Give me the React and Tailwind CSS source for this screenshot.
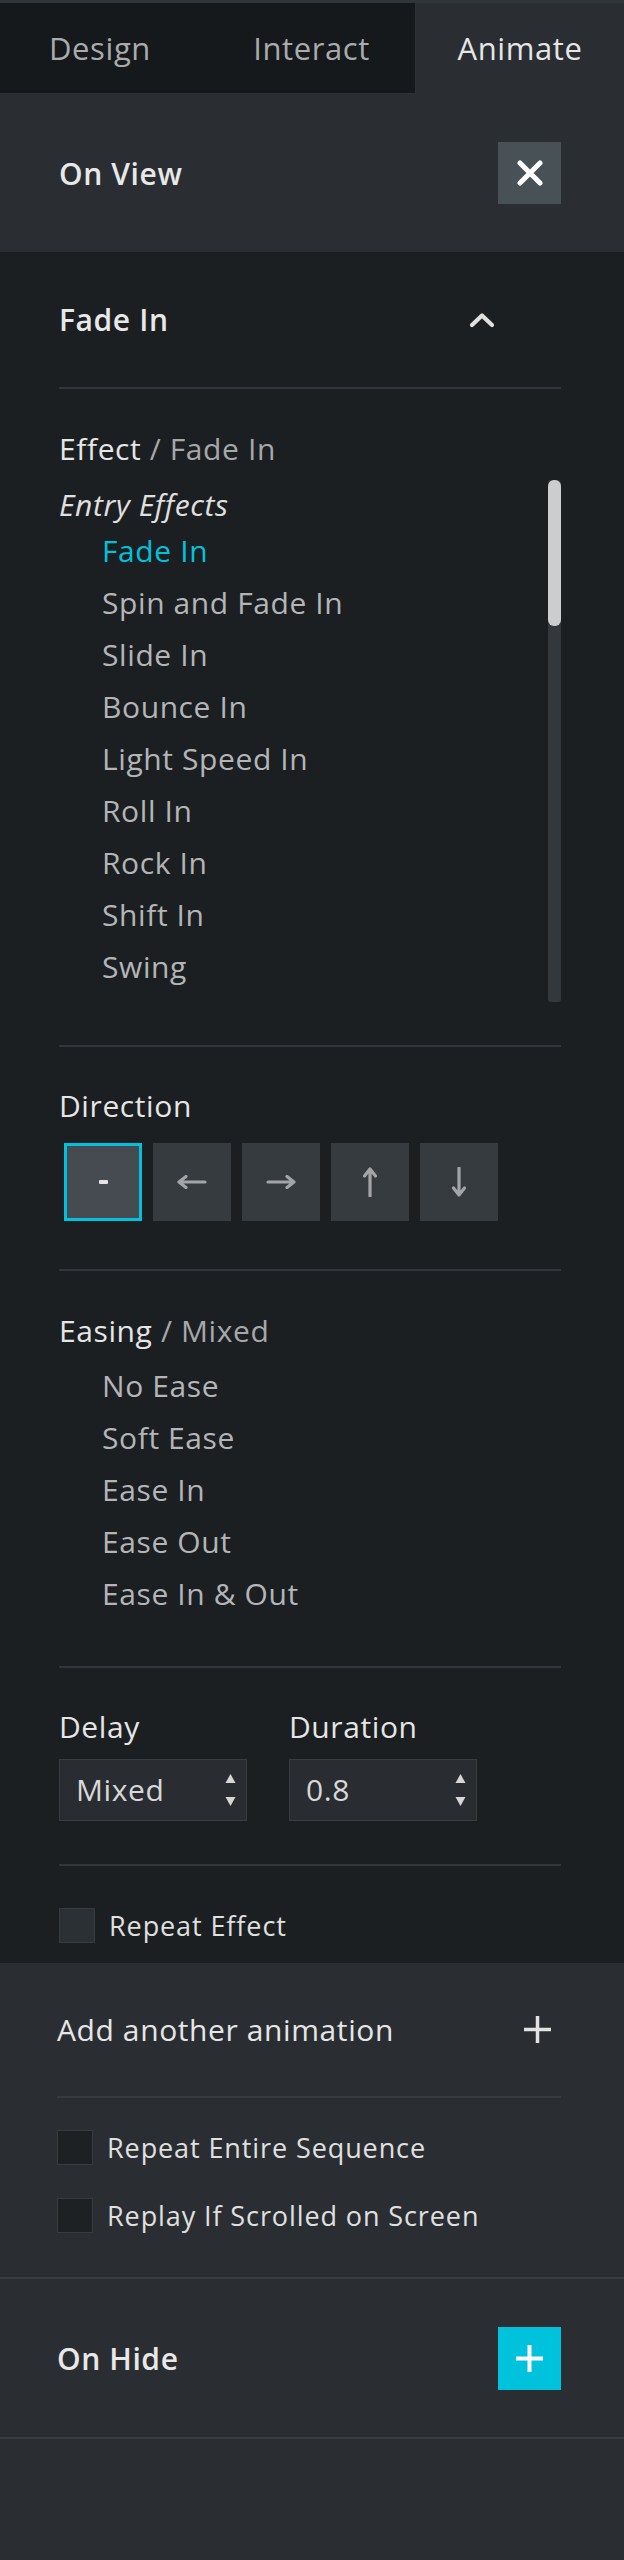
import React from 'react';

const effects = ['Fade In', 'Spin and Fade In', 'Slide In', 'Bounce In', 'Light Speed In', 'Roll In', 'Rock In', 'Shift In', 'Swing'];
const easings = ['No Ease', 'Soft Ease', 'Ease In', 'Ease Out', 'Ease In & Out'];

function Arrow({ dir }) {
  const stroke = '#a3a6a8';
  if (dir === 'left' || dir === 'right') {
    const d = dir === 'left' ? 'M2 7H28 M9 1.5L2 7L9 12.5' : 'M2 7H28 M21 1.5L28 7L21 12.5';
    return (
      <svg width="30" height="14" viewBox="0 0 30 14" fill="none">
        <path d={d} stroke={stroke} strokeWidth="3.2" strokeLinecap="round" strokeLinejoin="round" />
      </svg>
    );
  }
  const d = dir === 'up' ? 'M7 2V29 M1.5 9L7 2L12.5 9' : 'M7 1V28 M1.5 21L7 28L12.5 21';
  return (
    <svg width="14" height="30" viewBox="0 0 14 30" fill="none">
      <path d={d} stroke={stroke} strokeWidth="3.2" strokeLinecap="round" strokeLinejoin="round" />
    </svg>
  );
}

function Spinner() {
  return (
    <svg width="11" height="33" viewBox="0 0 11 33" fill="#d6d6d6">
      <path d="M5.5 0L10.5 9H0.5Z" />
      <path d="M0.5 23H10.5L5.5 32Z" />
    </svg>
  );
}

function NumberBox({ value }) {
  return (
    <div className="w-[188px] h-[62px] bg-[#292d31] border border-[#383d42] flex items-center justify-between pl-[16px] pr-[10px]">
      <span className="text-[30px] text-[#d8d8d8] leading-none">{value}</span>
      <Spinner />
    </div>
  );
}

function Check({ label, dark }) {
  return (
    <div className="flex items-center gap-[14px] h-[35px]">
      <div className={dark ? 'w-[36px] h-[35px] bg-[#2b3034] border border-[#363b40]' : 'w-[36px] h-[35px] bg-[#1d2124] border border-[#363b40]'} />
      <span className="text-[27px] tracking-[0.9px] text-[#e0e0e0] leading-none">{label}</span>
    </div>
  );
}

function Plus({ size = 27, color = '#e2e2e2', sw = 3.5 }) {
  return (
    <svg width={size} height={size} viewBox="0 0 27 27" fill="none">
      <path d="M13.5 1V26 M1 13.5H26" stroke={color} strokeWidth={sw} strokeLinecap="square" />
    </svg>
  );
}

export default function App() {
  return (
    <div className="w-[624px] h-[2560px] bg-[#2a2e32] font-['Open_Sans','Noto_Sans',sans-serif] tracking-[0.6px] text-[#e6e6e6] overflow-hidden">
      {/* Tabs */}
      <div className="border-t-[3px] border-[#30353a]">
        <div className="grid grid-cols-3 h-[91px] text-[31px]">
          <div className="bg-[#16191c] border-b border-[#2c3135] flex items-center justify-center text-[#a9abad] pr-[8px]">Design</div>
          <div className="bg-[#16191c] border-b border-r border-[#2c3135] flex items-center justify-center text-[#a9abad]">Interact</div>
          <div className="flex items-center justify-center text-[#e6e6e6]">Animate</div>
        </div>
      </div>

      {/* On View */}
      <div className="h-[158px] flex items-center justify-between pl-[59px] pr-[63px]">
        <span className="text-[30px] font-semibold text-[#e8e8e8]">On View</span>
        <div className="w-[63px] h-[62px] bg-[#485256] flex items-center justify-center">
          <svg width="26" height="26" viewBox="0 0 26 26" fill="none">
            <path d="M3 3L23 23 M23 3L3 23" stroke="#ffffff" strokeWidth="5" strokeLinecap="round" />
          </svg>
        </div>
      </div>

      {/* Dark panel */}
      <div className="bg-[#1b1f22] pl-[59px] pr-[63px] pb-[20px]">
        <div className="h-[135px] flex items-center justify-between">
          <span className="text-[30px] font-semibold text-[#e8e8e8]">Fade In</span>
          <svg className="mr-[66px]" width="26" height="16" viewBox="0 0 26 16" fill="none">
            <path d="M3 13L13 3.5L23 13" stroke="#e0e0e0" strokeWidth="4.2" strokeLinecap="round" strokeLinejoin="round" />
          </svg>
        </div>
        <div className="h-[2px] bg-[#30363b]" />

        <div className="mt-[39px] text-[30px] leading-[41px]">
          <span className="text-[#e6e6e6]">Effect</span>
          <span className="text-[#a6a8aa]"> / Fade In</span>
        </div>

        <div className="mt-[11px] h-[522px] flex">
          <div className="flex-1 text-[30px]">
            <div className="pt-[4px] leading-[41px] italic text-[#e0e0e0]">Entry Effects</div>
            {effects.map((e, i) => (
              <div key={e} className={i === 0 ? 'pl-[43px] leading-[52px] text-[#00c2dc]' : 'pl-[43px] leading-[52px] text-[#b3b5b7]'}>{e}</div>
            ))}
          </div>
          <div className="w-[13px] h-full bg-[#33383d] rounded-[3px]">
            <div className="h-[146px] bg-[#cdcdcd] rounded-[6px]" />
          </div>
        </div>

        <div className="mt-[43px] h-[2px] bg-[#30363b]" />

        <div className="mt-[38px] text-[30px] leading-[41px] text-[#e6e6e6]">Direction</div>
        <div className="mt-[17px] ml-[5px] flex gap-[11px]">
          <div className="w-[78px] h-[78px] bg-[#454b51] border-[3px] border-[#00c2dc] flex items-center justify-center">
            <div className="w-[9px] h-[4px] bg-[#e4e4e4] rounded-[1px]" />
          </div>
          <div className="w-[78px] h-[78px] bg-[#363b40] flex items-center justify-center"><Arrow dir="left" /></div>
          <div className="w-[78px] h-[78px] bg-[#363b40] flex items-center justify-center"><Arrow dir="right" /></div>
          <div className="w-[78px] h-[78px] bg-[#363b40] flex items-center justify-center"><Arrow dir="up" /></div>
          <div className="w-[78px] h-[78px] bg-[#363b40] flex items-center justify-center"><Arrow dir="down" /></div>
        </div>

        <div className="mt-[48px] h-[2px] bg-[#30363b]" />

        <div className="mt-[39px] text-[30px] leading-[41px]">
          <span className="text-[#e6e6e6]">Easing</span>
          <span className="text-[#a6a8aa]"> / Mixed</span>
        </div>
        <div className="mt-[9px] text-[30px]">
          {easings.map((e) => (
            <div key={e} className="pl-[43px] leading-[52px] text-[#b3b5b7]">{e}</div>
          ))}
        </div>

        <div className="mt-[46px] h-[2px] bg-[#30363b]" />

        <div className="mt-[38px] flex gap-[42px]">
          <div className="w-[188px]">
            <div className="text-[30px] leading-[41px] text-[#e6e6e6]">Delay</div>
            <div className="mt-[12px]"><NumberBox value="Mixed" /></div>
          </div>
          <div className="w-[188px]">
            <div className="text-[30px] leading-[41px] text-[#e6e6e6]">Duration</div>
            <div className="mt-[12px]"><NumberBox value="0.8" /></div>
          </div>
        </div>

        <div className="mt-[43px] h-[2px] bg-[#30363b]" />

        <div className="mt-[42px]">
          <Check label="Repeat Effect" dark />
        </div>
      </div>

      {/* Lower panel */}
      <div className="pl-[57px] pr-[63px]">
        <div className="h-[133px] flex items-center justify-between">
          <span className="text-[30px] text-[#e6e6e6]">Add another animation</span>
          <div className="mr-[10px]"><Plus /></div>
        </div>
        <div className="h-[2px] bg-[#363b40]" />
        <div className="pt-[32px] pb-[44px] flex flex-col gap-[33px]">
          <Check label="Repeat Entire Sequence" />
          <Check label="Replay If Scrolled on Screen" />
        </div>
      </div>
      <div className="h-[2px] bg-[#383d42]" />
      <div className="h-[158px] flex items-center justify-between pl-[57px] pr-[63px]">
        <span className="text-[30px] font-semibold text-[#e8e8e8]">On Hide</span>
        <div className="w-[63px] h-[63px] bg-[#00c2dc] flex items-center justify-center">
          <Plus size={27} color="#ffffff" sw={4} />
        </div>
      </div>
      <div className="h-[2px] bg-[#383d42]" />
    </div>
  );
}
